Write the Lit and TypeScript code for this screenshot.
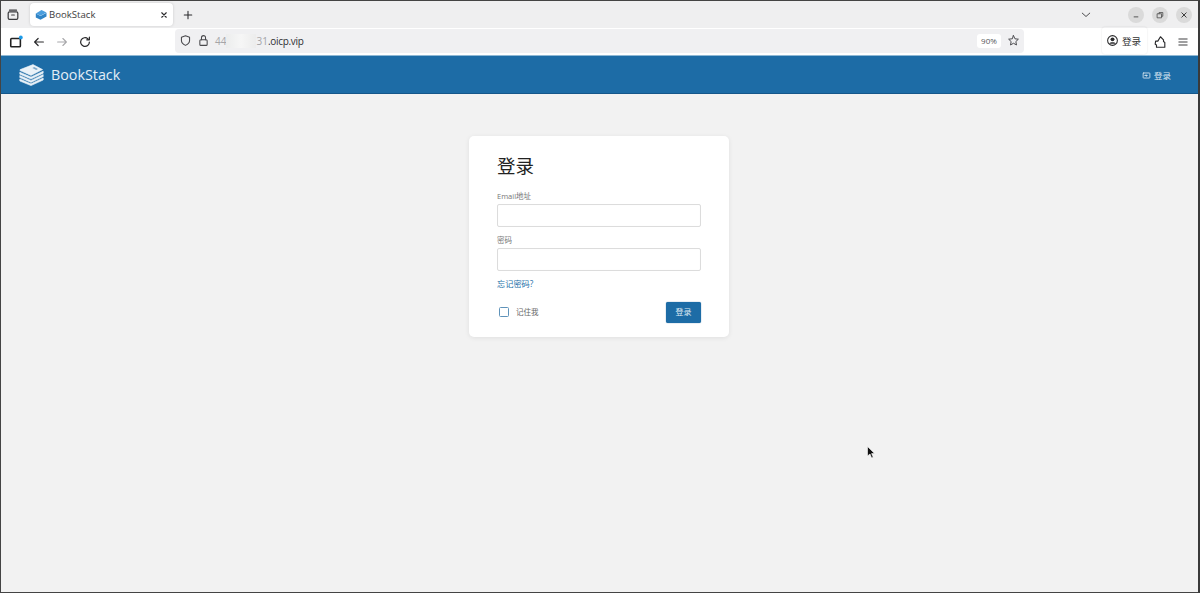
import { LitElement, html, css, svg } from "lit";
import { customElement } from "lit/decorators.js";

const stroke = (d: unknown, size = 16, color = "#3a3a3c", w = 1.4) => html`<svg width=${size} height=${size} viewBox="0 0 16 16" fill="none" stroke=${color} stroke-width=${w} stroke-linecap="round" stroke-linejoin="round">${d}</svg>`;

const logo = html`<svg width="25" height="22" viewBox="0 0 25 22" fill="#eaf2f8" stroke="#eaf2f8" stroke-width=".6" stroke-linejoin="round">
  <path d="M14 0.6 L23.6 5.6 L12 11.4 L1 6.6 Q0.6 6 1.2 5.6 Z" />
  <path d="M15.2 3 l3.8 2 -1.8 .9 -3.8 -1.9z" fill="#7fa9c9" stroke="none"/>
  <path d="M0.8 8.2 L12 13 L24.2 7.2 L24.2 9.2 L12 15 L0.8 10.2 Z" />
  <path d="M0.8 11.6 L12 16.4 L24.2 10.6 L24.2 12.6 L12 18.4 L0.8 13.6 Z" />
  <path d="M0.8 15 L12 19.8 L24.2 14 L24.2 16 L12 21.6 L0.8 17 Z" />
</svg>`;

@customElement("app-root")
export class AppRoot extends LitElement {
  static styles = css`
    :host {
      display: flex;
      flex-direction: column;
      height: 593px;
      width: 1200px;
      box-sizing: border-box;
      border: 1px solid #444;
      border-right: 2px solid #3a3a3a;
      font-family: "Open Sans", "Noto Sans CJK SC", sans-serif;
      background: #f2f2f2;
      position: relative;
      overflow: hidden;
    }
    .tabs {
      height: 27px;
      background: #efeff0;
      display: flex;
      align-items: center;
      flex: none;
    }
    .tabs .view { width: 24px; display: flex; justify-content: center; }
    .tab {
      margin-left: 5px;
      width: 143px;
      height: 23px;
      background: #fff;
      border-radius: 4px;
      box-shadow: 0 0 3px rgba(0,0,0,.15);
      display: flex;
      align-items: center;
      padding: 0 1px 0 5px;
      box-sizing: border-box;
      font-size: 9.6px;
      color: #3d3d40;
      gap: 2px;
    }
    .tab .title { flex: 1; }
    .tab .x { display: flex; width: 16px; justify-content: center; }
    .plus { margin-left: 7px; display: flex; width: 16px; justify-content: center; }
    .spacer { flex: 1; }
    .chev { display: flex; margin-right: 36px; }
    .win { display: flex; gap: 8px; margin-right: 6px; }
    .win span {
      width: 16px; height: 16px; border-radius: 50%;
      background: #dadada;
      display: flex; align-items: center; justify-content: center;
    }
    .toolbar {
      height: 27px;
      background: #fff;
      display: flex;
      align-items: center;
      flex: none;
    }
    .tb-left { width: 174px; display: flex; align-items: center; gap: 7px; padding-left: 7px; box-sizing: border-box; }
    .tb-left span { display: flex; width: 16px; justify-content: center; }
    .url {
      width: 849px;
      height: 24px;
      margin-top: -2px;
      background: #f0f0f2;
      border-radius: 4px;
      display: flex;
      align-items: center;
      box-sizing: border-box;
      padding: 0 4px;
      font-size: 10px;
      color: #2f2f33;
      gap: 5px;
    }
    .url .ic { display: flex; }
    .addr { display: flex; align-items: center; flex: 1; }
    .addr .dim { color: #a5a5a8; }
    .addr .tail { letter-spacing: -0.3px; }
    .addr .blur { display: inline-block; width: 30px; height: 14px; background: linear-gradient(90deg,#eceded,#f6f6f6,#ececec); }
    .zoom {
      width: 24px; height: 14px; background: #fff; border-radius: 3px;
      font-size: 8px; color: #55555a; display: flex; align-items: center; justify-content: center;
      margin-right: 1px;
    }
    .tb-right { flex: 1; display: flex; align-items: center; }
    .account {
      margin-left: 78px;
      height: 27px;
      margin-top: -2px;
      width: 45px;
      display: flex; align-items: center; gap: 3px;
      padding-left: 4px;
      box-sizing: border-box;
      font-size: 9.6px; color: #333;
      box-shadow: 0 0 2px rgba(0,0,0,.12);
      border-radius: 3px;
    }
    .ext { display: flex; margin-left: 6px; }
    .menu { display: flex; margin-left: 10px; }
    .header {
      height: 39px;
      flex: none;
      background: #1d6ca6;
      border-top: 1px solid #8fb8d4;
      border-bottom: 1px solid #15578a;
      box-sizing: border-box;
      display: flex;
      align-items: center;
      padding: 1px 27px 0 18px;
      color: #e8f0f6;
    }
    .brand { display: flex; align-items: center; gap: 7px; font-size: 14.3px; flex: 1; color: #e4eef6; }
    .brand .name { margin-top: -2px; }
    .login { display: flex; align-items: center; gap: 3px; font-size: 8.5px; color: #dbe8f2; }
    .main {
      flex: 1;
      display: flex;
      flex-direction: column;
      align-items: center;
      padding: 42px 1px 0 0;
      background: #f2f2f2;
    }
    .card {
      width: 260px;
      height: 201px;
      background: #fff;
      border-radius: 5px;
      box-shadow: 0 1px 5px rgba(0,0,0,.08);
      box-sizing: border-box;
      padding: 17px 28px 0;
      display: flex;
      flex-direction: column;
    }
    h1 {
      margin: 0;
      font-weight: 400;
      font-size: 18.5px;
      line-height: 26px;
      color: #222;
    }
    label { font-size: 7.5px; color: #777; line-height: 11px; display: block; }
    .l1 { margin-top: 12px; }
    .l2 { margin-top: 8px; }
    .input {
      height: 23px;
      border: 1px solid #dcdcdc;
      border-radius: 2px;
      box-sizing: border-box;
      margin-top: 2px;
      background: #fff;
      box-shadow: inset 0 0 1px rgba(0,0,0,.05);
    }
    .forgot { margin-top: 6px; font-size: 8.2px; line-height: 13px; color: #206ea7; }
    .actions { margin-top: 12px; display: flex; align-items: center; justify-content: space-between; height: 21px; }
    .remember { display: flex; align-items: center; font-size: 7.5px; color: #666; padding: 0 0 2px 2px; gap: 7px; }
    .box { width: 8px; height: 8px; border: 1.2px solid #5f93ba; border-radius: 1.5px; }
    .submit {
      width: 35px; height: 21px; background: #1d6ca6; color: #dfeaf3; font-size: 8px;
      border-radius: 2px; display: flex; align-items: center; justify-content: center;
      box-shadow: 0 0 1px #15578a; box-sizing: border-box; padding-bottom: 2px;
    }
    .cursor { position: absolute; left: 866px; top: 445px; display: flex; }
  `;

  render() {
    return html`
      <div class="tabs">
        <span class="view">${stroke(svg`<rect x="2.5" y="4.5" width="11" height="8.5" rx="1.5"/><path d="M4 2.5h8M6.5 8h3"/>`, 14)}</span>
        <div class="tab">
          <svg width="12" height="12" viewBox="0 0 12 12"><path d="M6.5 1 L11.5 3.6 L5.5 6.8 L0.8 4.4 Z" fill="#4a9ede"/><path d="M0.8 4.6 L5.5 7 L11.5 3.8 V7.5 L5.5 10.8 L0.8 8.4 Z" fill="#2f84c6"/></svg>
          <span class="title">BookStack</span>
          <span class="x">${stroke(svg`<path d="M5 5l6 6M11 5l-6 6"/>`, 12, "#2a2a2c", 1.5)}</span>
        </div>
        <span class="plus">${stroke(svg`<path d="M8 3v10M3 8h10"/>`, 12, "#2a2a2c", 1.4)}</span>
        <span class="spacer"></span>
        <span class="chev">${stroke(svg`<path d="M3 5.5l5 4.5 5-4.5"/>`, 12, "#3a3a3c", 1.2)}</span>
        <div class="win">
          <span>${stroke(svg`<path d="M5 11h6"/>`, 10, "#444", 1.4)}</span>
          <span>${stroke(svg`<rect x="4" y="6" width="6.5" height="6.5"/><path d="M6.5 6V4h6v6h-2"/>`, 10, "#444", 1.2)}</span>
          <span>${stroke(svg`<path d="M4.5 4.5l7 7M11.5 4.5l-7 7"/>`, 10, "#333", 1.5)}</span>
        </div>
      </div>
      <div class="toolbar">
        <div class="tb-left">
          <span>${stroke(svg`<rect x="2" y="4" width="11" height="9.5" rx="1" stroke-width="1.8" stroke="#222"/><circle cx="13.5" cy="2.8" r="2.2" fill="#1e9be8" stroke="none"/>`, 14)}</span>
          <span>${stroke(svg`<path d="M13 8H3M7 4L3 8l4 4"/>`, 14, "#2a2a2c", 1.4)}</span>
          <span>${stroke(svg`<path d="M3 8h10M9 4l4 4-4 4"/>`, 14, "#a8a8ab", 1.3)}</span>
          <span>${stroke(svg`<path d="M13 8a5 5 0 1 1-1.6-3.6M13 2.5v3h-3"/>`, 14, "#2a2a2c", 1.4)}</span>
        </div>
        <div class="url">
          <span class="ic">${stroke(svg`<path d="M8 2.2l5 1.8v4c0 3-2.2 4.8-5 6-2.8-1.2-5-3-5-6V4z"/>`, 13, "#48484c", 1.3)}</span>
          <span class="ic">${stroke(svg`<rect x="3.5" y="7" width="9" height="7" rx="1.2"/><path d="M5.5 7V4.5a2.5 2.5 0 0 1 5 0V7"/>`, 13, "#48484c", 1.3)}</span>
          <span class="addr"><span class="dim">44</span><span class="blur"></span><span class="dim">31</span><span class="tail">.oicp.vip</span></span>
          <span class="zoom">90%</span>
          <span class="ic">${stroke(svg`<path d="M8 2l1.8 3.9 4.2.5-3.1 2.9.8 4.2L8 11.4l-3.7 2.1.8-4.2L2 6.4l4.2-.5z"/>`, 13, "#48484c", 1.2)}</span>
        </div>
        <div class="tb-right">
          <div class="account">
            ${stroke(svg`<circle cx="8" cy="8" r="6"/><circle cx="8" cy="6.6" r="2.4" fill="#2a2a2c" stroke="none"/><path d="M4 12c1-2.4 7-2.4 8 0" fill="#2a2a2c" stroke="none"/>`, 13, "#2a2a2c", 1.3)}
            <span>登录</span>
          </div>
          <span class="ext">${stroke(svg`<path d="M3 7h2.5L8.5 2 12 5.5v2l1.5 1V14H4v-2.5L2.5 10.5z"/>`, 14, "#2a2a2c", 1.3)}</span>
          <span class="menu">${stroke(svg`<path d="M2.5 4h11M2.5 8h11M2.5 12h11"/>`, 12, "#3a3a3c", 1.3)}</span>
        </div>
      </div>
      <header class="header">
        <div class="brand">${logo}<span class="name">BookStack</span></div>
        <div class="login">
          ${stroke(svg`<rect x="2" y="3.5" width="12" height="9" rx="1"/><path d="M5 8h4M7.5 6.5L9 8 7.5 9.5"/>`, 9, "#dbe8f2", 1.5)}
          <span>登录</span>
        </div>
      </header>
      <main class="main">
        <section class="card">
          <h1>登录</h1>
          <label class="l1">Email地址</label>
          <div class="input"></div>
          <label class="l2">密码</label>
          <div class="input"></div>
          <div class="forgot">忘记密码?</div>
          <div class="actions">
            <div class="remember"><span class="box"></span><span>记住我</span></div>
            <div class="submit">登录</div>
          </div>
        </section>
      </main>
      <div class="cursor">
        <svg width="9" height="13" viewBox="0 0 9 13"><path d="M0.5 0.5 V10 L3 8 L4.6 12 L6.2 11.3 L4.6 7.6 H7.6 Z" fill="#111" stroke="#fff" stroke-width=".6"/></svg>
      </div>
    `;
  }
}
